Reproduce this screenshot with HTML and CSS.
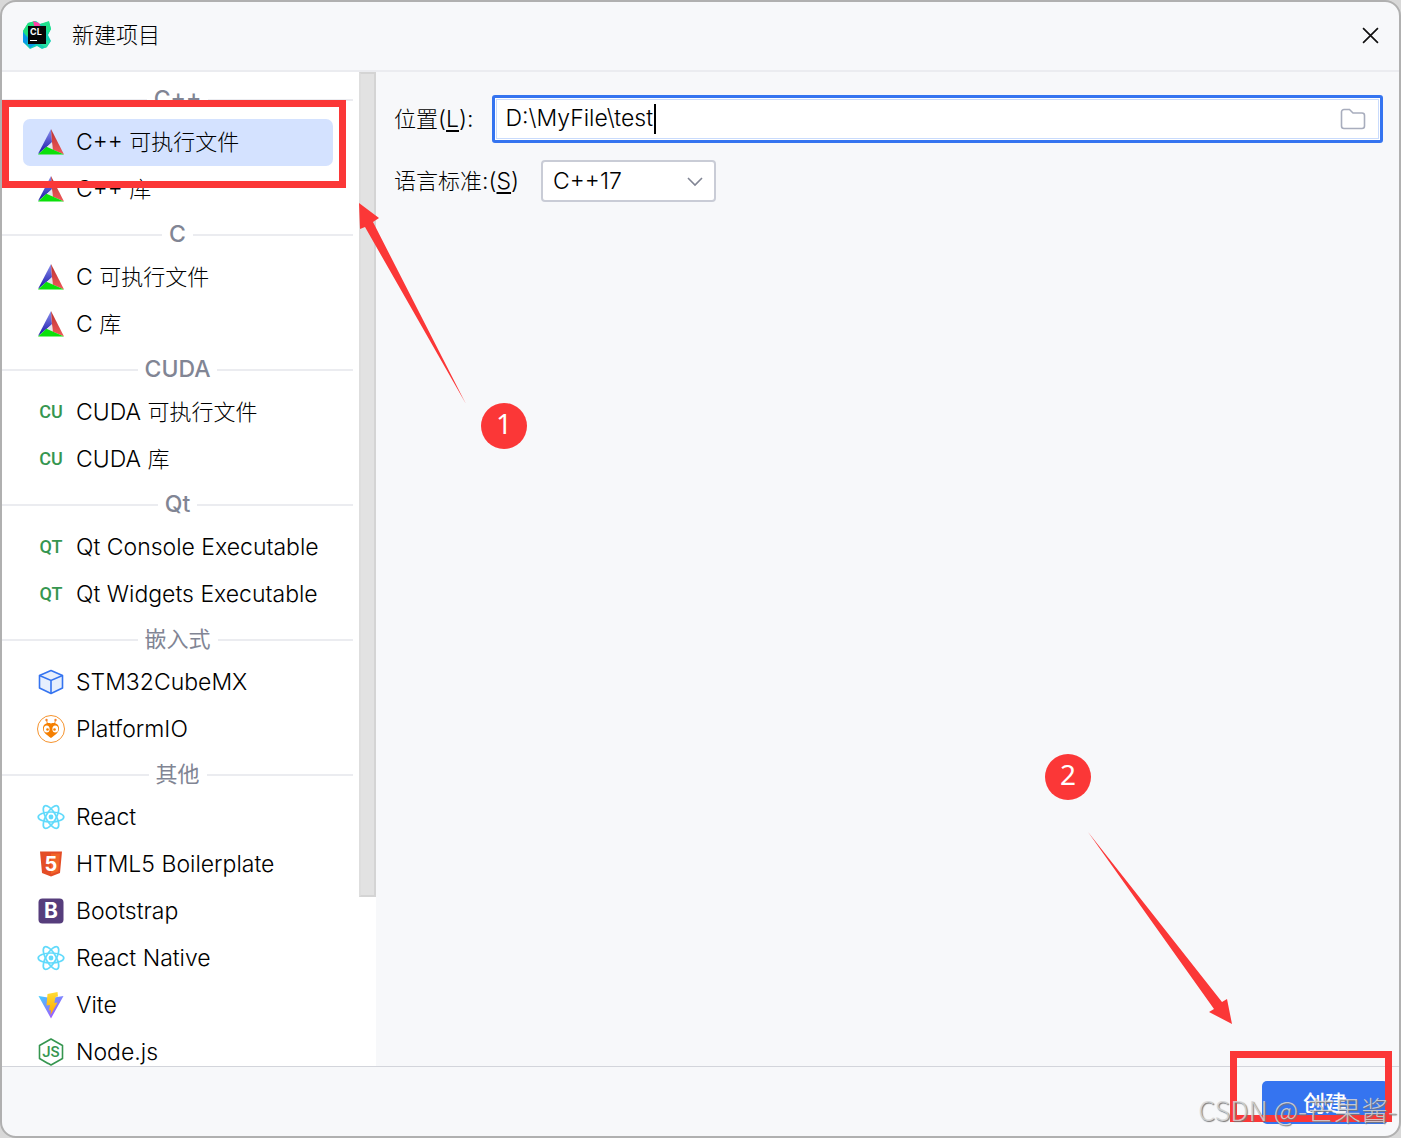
FILE: index.html
```html
<!DOCTYPE html>
<html lang="zh-CN">
<head>
  <meta charset="UTF-8">
  <meta name="viewport" content="width=device-width, initial-scale=1.0">
  <title>新建项目</title>
  <link rel="stylesheet" href="styles.css">
</head>
<body>
  <!-- shared icons -->
  <svg class="sprite" aria-hidden="true">
    <defs>
      <linearGradient id="blue" x1="0" y1="0" x2="0" y2="1"><stop offset="0" stop-color="#8a90ee"/><stop offset="1" stop-color="#1713a8"/></linearGradient>
      <linearGradient id="red" x1="0" y1="0" x2="0" y2="1"><stop offset="0" stop-color="#b93030"/><stop offset="1" stop-color="#f05a5a"/></linearGradient>
      <linearGradient id="viteBlue" x1="0" y1="0" x2="1" y2="1"><stop offset="0" stop-color="#41d1ff"/><stop offset="1" stop-color="#bd34fe"/></linearGradient>
      <linearGradient id="viteYellow" x1="0" y1="0" x2="0" y2="1"><stop offset="0" stop-color="#ffdd35"/><stop offset="1" stop-color="#ffa800"/></linearGradient>
    </defs>
    <symbol id="cmake" viewBox="0 0 28 28">
      <path d="M14 1 1 26 15 14.500z" fill="url(#blue)"/>
      <path d="M14 1 15.500 21.500 27 26.500z" fill="url(#red)"/>
      <path d="M15 14 15.700 21.500 10 19z" fill="#e4e5ec"/>
      <path d="M1 26.500 9.500 18.800 27 26.500z" fill="#0be00b"/>
    </symbol>
    <symbol id="cu" viewBox="0 0 28 28">
      <text x="14" y="20" class="letters">CU</text>
    </symbol>
    <symbol id="qt" viewBox="0 0 28 28">
      <text x="14" y="20" class="letters">QT</text>
    </symbol>
    <symbol id="cube" viewBox="0 0 28 28">
      <path d="M14 2.500 25.500 7.500V20L14 25.500 2.500 20V7.500z" fill="#e7effd" stroke="#3574f0" stroke-width="1.600" stroke-linejoin="round"/>
      <path d="M2.500 7.500 14 12.500 25.500 7.500M14 12.500v13" fill="none" stroke="#3574f0" stroke-width="1.600"/>
    </symbol>
    <symbol id="platformio" viewBox="0 0 28 28">
      <circle cx="14" cy="14" r="13.500" fill="#fff" stroke="#f5932e"/>
      <path d="M10.500 9 9.500 5M17.500 9 18.500 5" stroke="#f5932e" stroke-width="1"/>
      <circle cx="9.500" cy="5" r="1.200" fill="#f5822a"/><circle cx="18.500" cy="5" r="1.200" fill="#f5822a"/>
      <path d="M14 8.500C9.500 7 6 9.500 6 13.500c0 4 4 6.500 8 9.500 4-3 8-5.500 8-9.500 0-4-3.500-6.500-8-5z" fill="#f57f00"/>
      <ellipse cx="9.700" cy="14" rx="2.900" ry="3.500" fill="#fff"/><ellipse cx="18.300" cy="14" rx="2.900" ry="3.500" fill="#fff"/>
      <circle cx="10.500" cy="14.500" r="1.300" fill="#f57f00"/><circle cx="17.500" cy="14.500" r="1.300" fill="#f57f00"/>
    </symbol>
    <symbol id="react" viewBox="0 0 28 28">
      <g fill="none" stroke="#61dafb" stroke-width="1.700">
        <ellipse cx="14" cy="14" rx="12.800" ry="5"/>
        <ellipse cx="14" cy="14" rx="12.800" ry="5" transform="rotate(60 14 14)"/>
        <ellipse cx="14" cy="14" rx="12.800" ry="5" transform="rotate(120 14 14)"/>
      </g>
      <circle cx="14" cy="14" r="2.400" fill="#61dafb"/>
    </symbol>
    <symbol id="html5" viewBox="0 0 28 28">
      <path d="M3 1.500h22L23 23l-9 3.500L5 23z" fill="#e44d26"/>
      <path d="M14 3.500h9L21.300 21.500 14 24z" fill="#f16529"/>
      <text x="14" y="21" class="five">5</text>
    </symbol>
    <symbol id="bootstrap" viewBox="0 0 28 28">
      <rect x="1.500" y="1.500" width="25" height="25" rx="4" fill="#563d7c"/>
      <text x="14" y="21" class="bee">B</text>
    </symbol>
    <symbol id="vite" viewBox="0 0 28 28">
      <path d="M1.500 5 14 27.500 26.500 5 14 7z" fill="url(#viteBlue)"/>
      <path d="M20.500 1 10.500 3 9.500 14.500 13 14 12 19.500 14 19 13.500 24 20.500 11.500 17.300 12 18.500 6 21 5.500z" fill="url(#viteYellow)"/>
    </symbol>
    <symbol id="nodejs" viewBox="0 0 28 28">
      <path d="M11 25.500 2.500 20.500V7.500L14 1 25.500 7.500V20.500L14 27l-3-1.700" fill="none" stroke="#369650" stroke-width="1.600" stroke-linejoin="round"/>
      <text x="14" y="19" class="js">JS</text>
    </symbol>
  </svg>

  <div class="window">
    <header class="titlebar">
      <svg class="logo" viewBox="0 0 30 30" aria-hidden="true">
        <path d="M1 11 6 3l8-2 4 3 9-2 2 7-3 6 3 6-4 6-5 2-5-3-7 3L1 22z" fill="#12cfb0"/>
        <path d="M6 3l7-2-1 8-8 8-3-6z" fill="#21e07c"/>
        <path d="M11 1l6 2 2 4-6 2z" fill="#ff3ea5"/>
        <path d="M18 4l9-3 2 8-3 5-3-8z" fill="#20e28a"/>
        <path d="M1 12l5 6-1 7-4-3zM6 24l8 0-6 4z" fill="#0a98e8"/>
        <path d="M18 24l8-4 2 1-4 7z" fill="#28dfa0"/>
        <rect x="6" y="6" width="18" height="18" fill="#050505"/>
        <text x="8" y="15" class="logo-text">CL</text>
        <path d="M8 20.500h7" stroke="#fff" stroke-width="1.200"/>
      </svg>
      <h1 class="title">新建项目</h1>
      <button class="close" type="button" aria-label="关闭">
        <svg viewBox="0 0 16 16"><path d="M1 1l14 14M15 1 1 15" stroke="#111" stroke-width="1.600"/></svg>
      </button>
    </header>

    <main class="content">
      <aside class="sidebar">
        <nav class="list">
          <h2 class="group">C++</h2>
          <button class="item selected" type="button"><svg class="icon"><use href="#cmake"/></svg><span>C++ <span class="zh">可执行文件</span></span></button>
          <button class="item" type="button"><svg class="icon"><use href="#cmake"/></svg><span>C++ <span class="zh">库</span></span></button>
          <h2 class="group">C</h2>
          <button class="item" type="button"><svg class="icon"><use href="#cmake"/></svg><span>C <span class="zh">可执行文件</span></span></button>
          <button class="item" type="button"><svg class="icon"><use href="#cmake"/></svg><span>C <span class="zh">库</span></span></button>
          <h2 class="group">CUDA</h2>
          <button class="item" type="button"><svg class="icon"><use href="#cu"/></svg><span>CUDA <span class="zh">可执行文件</span></span></button>
          <button class="item" type="button"><svg class="icon"><use href="#cu"/></svg><span>CUDA <span class="zh">库</span></span></button>
          <h2 class="group">Qt</h2>
          <button class="item" type="button"><svg class="icon"><use href="#qt"/></svg>Qt Console Executable</button>
          <button class="item" type="button"><svg class="icon"><use href="#qt"/></svg>Qt Widgets Executable</button>
          <h2 class="group"><span class="zh">嵌入式</span></h2>
          <button class="item" type="button"><svg class="icon"><use href="#cube"/></svg>STM32CubeMX</button>
          <button class="item" type="button"><svg class="icon"><use href="#platformio"/></svg>PlatformIO</button>
          <h2 class="group"><span class="zh">其他</span></h2>
          <button class="item" type="button"><svg class="icon"><use href="#react"/></svg>React</button>
          <button class="item" type="button"><svg class="icon"><use href="#html5"/></svg>HTML5 Boilerplate</button>
          <button class="item" type="button"><svg class="icon"><use href="#bootstrap"/></svg>Bootstrap</button>
          <button class="item" type="button"><svg class="icon"><use href="#react"/></svg>React Native</button>
          <button class="item" type="button"><svg class="icon"><use href="#vite"/></svg>Vite</button>
          <button class="item" type="button"><svg class="icon"><use href="#nodejs"/></svg>Node.js</button>
        </nav>
        <div class="scrollbar"></div>
      </aside>

      <form class="settings">
        <div class="row">
          <label for="location"><span class="zh">位置</span>(<u>L</u>):</label>
          <div class="field">
            <input id="location" type="text" value="D:\MyFile\test">
            <span class="caret"></span>
            <button class="browse" type="button" aria-label="浏览">
              <svg viewBox="0 0 26 22"><path d="M1.500 4a2.500 2.500 0 0 1 2.500-2.500h5.500L13 5h9a2.500 2.500 0 0 1 2.500 2.500V18a2.500 2.500 0 0 1-2.500 2.500H4A2.500 2.500 0 0 1 1.500 18z" fill="none" stroke="#a8adbd" stroke-width="1.600"/></svg>
            </button>
          </div>
        </div>
        <div class="row">
          <label for="standard"><span class="zh">语言标准</span>:(<u>S</u>)</label>
          <div class="select">
            <select id="standard">
              <option>C++17</option>
            </select>
            <svg class="chevron" viewBox="0 0 16 10"><path d="M1 1l7 7 7-7" fill="none" stroke="#818594" stroke-width="1.600"/></svg>
          </div>
        </div>
      </form>
    </main>

    <footer class="footer">
      <button class="create" type="button">创建</button>
    </footer>

    <!-- step 1 -->
    <div class="frame frame-one"></div>
    <svg class="arrow arrow-one" viewBox="0 0 107 201"><path d="M0 0 20 15 14 19 107 201 6 24 1 26z" fill="#fb3737"/></svg>
    <span class="step step-one">1</span>

    <!-- step 2 -->
    <div class="frame frame-two"></div>
    <svg class="arrow arrow-two" viewBox="0 0 144 192"><path d="M0 0 134 170 139 167 144 192 121 180 126 177z" fill="#fb3737"/></svg>
    <span class="step step-two">2</span>

    <span class="watermark">CSDN @-芒果酱-</span>
  </div>
</body>
</html>
```
FILE: styles.css
```css
* {
  box-sizing: border-box;
}

body {
  margin: 0;
  background: #d8d8d8;
  color: #000;
  font-family: Inter, "Noto Sans CJK SC", sans-serif;
  font-size: 23px;
  font-weight: 350;
  line-height: 28px;
}

button, input, select {
  font: inherit;
  color: inherit;
}

.sprite {
  position: absolute;
  width: 0;
  height: 0;
}

.zh {
  font-size: 22px;
  font-weight: 300;
}

.window {
  position: relative;
  display: flex;
  flex-direction: column;
  height: 100vh;
  border: 2px solid #b0b0b0;
  border-radius: 16px;
  background: #f7f8fa;
  overflow: hidden;
}

/* Title bar */
.titlebar {
  display: flex;
  align-items: center;
  flex: none;
  height: 70px;
  padding: 0 20px 2px;
  border-bottom: 2px solid #ebecf0;
}

.logo {
  width: 30px;
  height: 30px;
}

.logo-text {
  fill: #fff;
  font: bold 9px Inter, sans-serif;
}

.title {
  margin: 0 auto 0 20px;
  font-size: 22px;
  font-weight: 300;
}

.close {
  display: flex;
  padding: 0;
  border: 0;
  background: none;
}

.close svg {
  width: 17px;
  height: 17px;
}

.content {
  display: flex;
  flex: 1;
  min-height: 0;
}

/* Project types */
.sidebar {
  display: flex;
  flex: none;
  width: 374px;
  background: #fff;
  overflow: hidden;
}

.list {
  flex: 1;
  padding: 6px 6px 0 0;
}

.group {
  display: flex;
  align-items: center;
  gap: 7px;
  height: 41px;
  margin: 0;
  color: #818594;
  font-size: 23px;
  font-weight: 500;
}

.group .zh {
  font-weight: 400;
}

.group::before, .group::after {
  content: "";
  flex: 1;
  height: 2px;
  margin-top: 2px;
  background: #ebecf0;
}

.item {
  display: flex;
  align-items: center;
  gap: 11px;
  width: 310px;
  height: 47px;
  margin-left: 21px;
  padding: 0 14px 2px;
  border: 0;
  border-radius: 7px;
  background: none;
  white-space: nowrap;
}

.item.selected {
  background: #d4e2ff;
}

.icon {
  flex: none;
  width: 28px;
  height: 28px;
}

.letters {
  fill: #369650;
  font: 500 18px Roboto, sans-serif;
  text-anchor: middle;
}

.five {
  fill: #fff;
  font: bold 20px Inter, sans-serif;
  text-anchor: middle;
}

.bee {
  fill: #fff;
  font: bold 21px Inter, sans-serif;
  text-anchor: middle;
}

.js {
  fill: #369650;
  font: 500 15px Roboto, sans-serif;
  text-anchor: middle;
}

.scrollbar {
  width: 17px;
  height: 83%;
  border: 2px solid #d4d4d4;
  border-left-color: #dedede;
  background: #e2e2e2;
}

/* Settings */
.settings {
  display: flex;
  flex: 1;
  flex-direction: column;
  gap: 17px;
  padding: 23px 16px 0 18px;
}

.row {
  display: flex;
  align-items: center;
  gap: 18px;
}

.row u {
  text-underline-offset: 3px;
}

.field {
  position: relative;
  flex: 1;
}

.field input {
  display: block;
  width: 100%;
  height: 48px;
  padding: 0 48px 2px 11px;
  border: 3px solid #3574f0;
  border-radius: 3px;
  background: #fff;
  outline: 1px solid #c9dbfc;
  outline-offset: -5px;
}

.caret {
  position: absolute;
  top: 9px;
  left: 162px;
  width: 2px;
  height: 30px;
  background: #000;
}

.browse {
  position: absolute;
  top: 13px;
  right: 17px;
  display: flex;
  padding: 0;
  border: 0;
  background: none;
}

.browse svg {
  width: 26px;
  height: 22px;
}

.select {
  position: relative;
  margin-left: 4px;
}

.select select {
  display: block;
  appearance: none;
  width: 175px;
  height: 42px;
  padding: 0 10px;
  border: 2px solid #c9ccd6;
  border-radius: 4px;
  background: #fff;
}

.chevron {
  position: absolute;
  top: 17px;
  right: 13px;
  width: 16px;
  height: 10px;
  pointer-events: none;
}

/* Footer */
.footer {
  display: flex;
  flex: none;
  justify-content: flex-end;
  height: 70px;
  padding: 14px 11px 0 0;
  border-top: 1px solid #d3d5db;
}

.create {
  width: 126px;
  height: 43px;
  border: 0;
  border-radius: 5px;
  background: #3574f0;
  color: #fff;
  font-size: 22px;
  font-weight: 500;
}

/* Step marks over the dialog */
.frame, .arrow, .step, .watermark {
  position: absolute;
  pointer-events: none;
}

.frame {
  border: 7px solid #fb3737;
}

.frame-one {
  top: 98px;
  left: 0;
  width: 344px;
  height: 88px;
}

.frame-two {
  right: 7px;
  bottom: 14px;
  width: 162px;
  height: 71px;
}

.arrow-one {
  top: 201px;
  left: 357px;
  width: 107px;
  height: 201px;
}

.arrow-two {
  right: 167px;
  bottom: 112px;
  width: 144px;
  height: 192px;
}

.step {
  width: 46px;
  height: 46px;
  border-radius: 50%;
  background: #fb3737;
  color: #fff;
  font: 28px/40px "Noto Sans", sans-serif;
  text-align: center;
}

.step-one {
  top: 401px;
  left: 479px;
}

.step-two {
  right: 308px;
  bottom: 336px;
}

.watermark {
  right: 2px;
  bottom: 6px;
  color: rgba(215, 215, 215, 0.85);
  font: 300 27px/40px "Noto Sans CJK SC", sans-serif;
  text-shadow: 1px 1px 1px #777;
  white-space: nowrap;
}
```
